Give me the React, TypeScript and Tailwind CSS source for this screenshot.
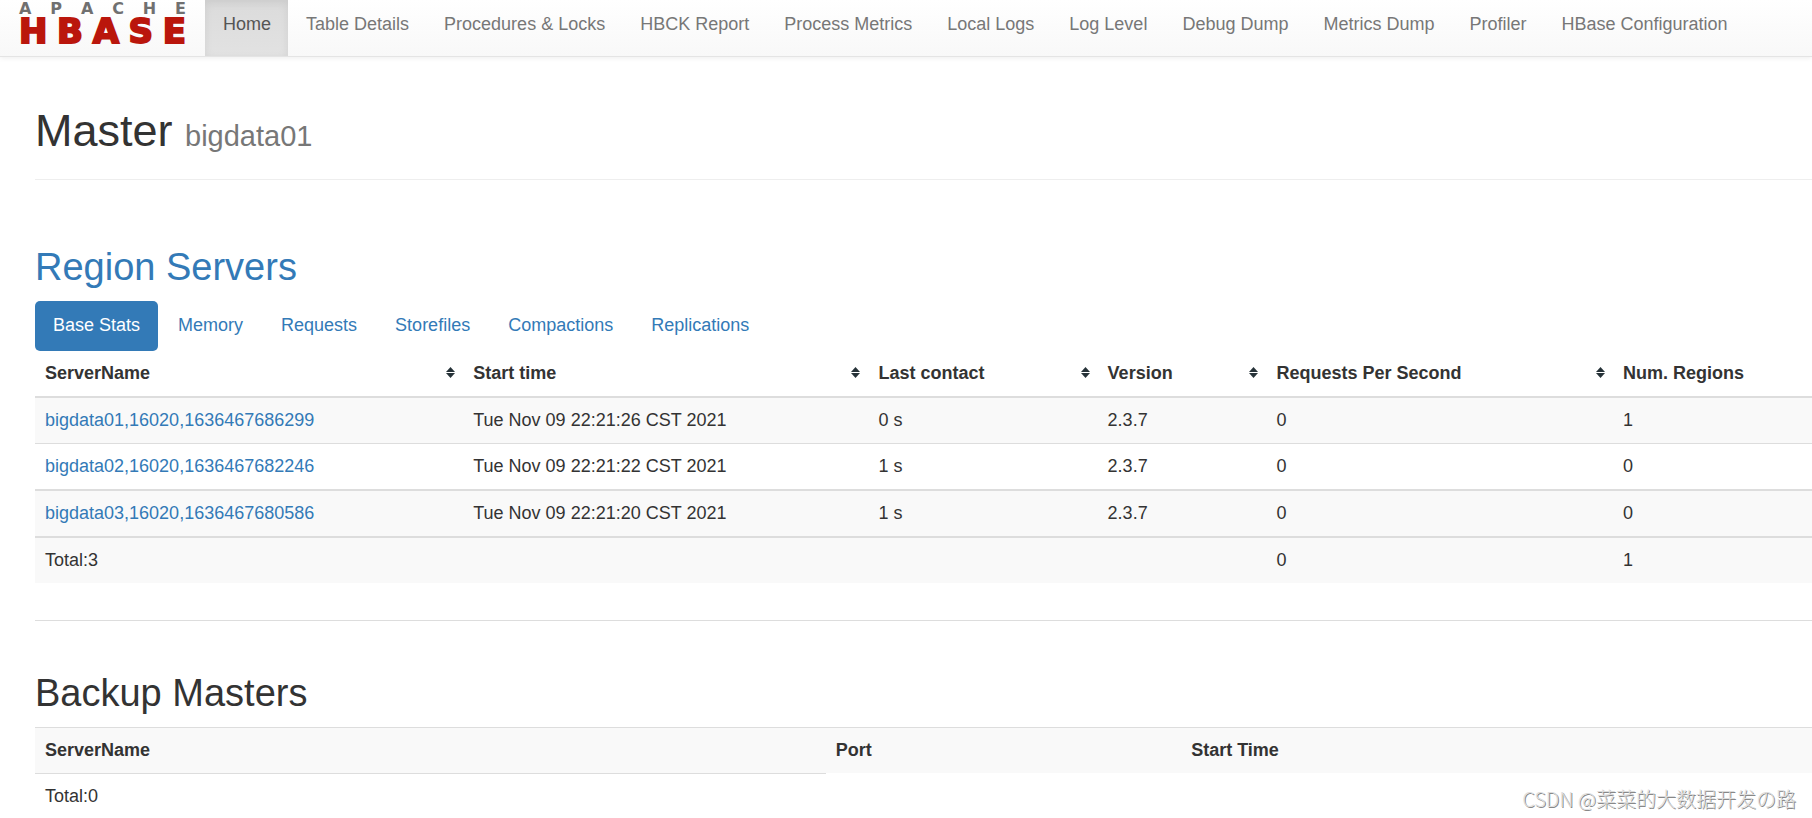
import { useState } from 'react'
import { clsx } from 'clsx'

const navItems = [
  'Home',
  'Table Details',
  'Procedures & Locks',
  'HBCK Report',
  'Process Metrics',
  'Local Logs',
  'Log Level',
  'Debug Dump',
  'Metrics Dump',
  'Profiler',
  'HBase Configuration',
]

const tabs = [
  'Base Stats',
  'Memory',
  'Requests',
  'Storefiles',
  'Compactions',
  'Replications',
]

const columns = [
  { label: 'ServerName', width: 'w-[24.1%]', sortable: true },
  { label: 'Start time', width: 'w-[22.8%]', sortable: true },
  { label: 'Last contact', width: 'w-[12.9%]', sortable: true },
  { label: 'Version', width: 'w-[9.5%]', sortable: true },
  { label: 'Requests Per Second', width: 'w-[19.5%]', sortable: true },
  { label: 'Num. Regions', width: 'w-[11.2%]', sortable: false },
]

const servers = [
  {
    name: 'bigdata01,16020,1636467686299',
    start: 'Tue Nov 09 22:21:26 CST 2021',
    contact: '0 s',
    version: '2.3.7',
    rps: 0,
    regions: 1,
    row: 'bg-[#f9f9f9]',
    cell: 'border-t-2',
  },
  {
    name: 'bigdata02,16020,1636467682246',
    start: 'Tue Nov 09 22:21:22 CST 2021',
    contact: '1 s',
    version: '2.3.7',
    rps: 0,
    regions: 0,
    row: 'bg-white',
    cell: 'border-t',
  },
  {
    name: 'bigdata03,16020,1636467680586',
    start: 'Tue Nov 09 22:21:20 CST 2021',
    contact: '1 s',
    version: '2.3.7',
    rps: 0,
    regions: 0,
    row: 'bg-[#f9f9f9]',
    cell: 'border-t-2',
  },
]

function Logo() {
  return (
    <a
      href="#"
      aria-label="Apache HBase"
      className="flex w-[167px] flex-col font-['DejaVu_Sans',sans-serif] font-bold"
    >
      <span className="flex h-[17px] justify-between text-[16px] leading-[18px] text-[#707070]">
        {'APACHE'.split('').map((c, i) => (
          <span key={i}>{c}</span>
        ))}
      </span>
      <span className="flex h-[29px] justify-between text-[34px] leading-[29px] text-[#ba160c] [-webkit-text-stroke:2px_#ba160c]">
        {'HBASE'.split('').map((c, i) => (
          <span key={i}>{c}</span>
        ))}
      </span>
    </a>
  )
}

function SortIcon() {
  return (
    <svg width="9" height="11" viewBox="0 0 9 11" fill="#263238" className="mb-0.5">
      <path d="M4.5 0 9 5H0z" />
      <path d="M0 6h9l-4.5 5z" />
    </svg>
  )
}

function Navbar() {
  return (
    <header className="flex border-b border-[#e4e4e4] bg-linear-to-b from-white to-[#f8f8f8] pl-[19px] shadow-[0_1px_5px_rgba(0,0,0,0.075)]">
      <Logo />
      <nav className="ml-[19px]">
        <ul className="flex">
          {navItems.map((item, i) => (
            <li key={item}>
              <a
                href="#"
                className={clsx(
                  'block pt-3 pr-[17px] pb-[19px] pl-[18px] whitespace-nowrap',
                  i === 0
                    ? 'bg-linear-to-b from-[#dbdbdb] to-[#e2e2e2] text-[#555] shadow-[inset_0_3px_9px_rgba(0,0,0,0.075)]'
                    : 'text-[#777]'
                )}
              >
                {item}
              </a>
            </li>
          ))}
        </ul>
      </nav>
    </header>
  )
}

function RegionServers() {
  const [active, setActive] = useState('Base Stats')

  return (
    <section className="mt-[66px]">
      <h2 className="mb-[13px] text-[38px] leading-[42px]">
        <a href="#" className="text-[#337ab7]">
          Region Servers
        </a>
      </h2>

      <div role="tablist" className="flex gap-0.5">
        {tabs.map((tab) => (
          <button
            key={tab}
            role="tab"
            aria-selected={tab === active}
            onClick={() => setActive(tab)}
            className={clsx(
              'rounded-[5px] px-[18px] pt-3 pb-[13px]',
              tab === active ? 'bg-[#337ab7] text-white' : 'text-[#337ab7]'
            )}
          >
            {tab}
          </button>
        ))}
      </div>

      <table className="w-full table-fixed border-separate border-spacing-0 text-left">
        <thead>
          <tr>
            {columns.map((col) => (
              <th key={col.label} className={clsx('py-[10px] pr-2 pl-[10px]', col.width)}>
                <button className="flex w-full items-center justify-between font-bold">
                  {col.label}
                  {col.sortable && <SortIcon />}
                </button>
              </th>
            ))}
          </tr>
        </thead>
        <tbody>
          {servers.map((s) => (
            <tr key={s.name} className={s.row}>
              <td className={clsx('border-[#ddd] p-[10px]', s.cell)}>
                <a href="#" className="text-[#337ab7]">
                  {s.name}
                </a>
              </td>
              <td className={clsx('border-[#ddd] p-[10px]', s.cell)}>{s.start}</td>
              <td className={clsx('border-[#ddd] p-[10px]', s.cell)}>{s.contact}</td>
              <td className={clsx('border-[#ddd] p-[10px]', s.cell)}>{s.version}</td>
              <td className={clsx('border-[#ddd] p-[10px]', s.cell)}>{s.rps}</td>
              <td className={clsx('border-[#ddd] p-[10px]', s.cell)}>{s.regions}</td>
            </tr>
          ))}
        </tbody>
        <tfoot>
          <tr className="bg-[#f9f9f9]">
            <td colSpan={4} className="border-t-2 border-[#ddd] p-[10px]">
              Total:3
            </td>
            <td className="border-t-2 border-[#ddd] p-[10px]">0</td>
            <td className="border-t-2 border-[#ddd] p-[10px]">1</td>
          </tr>
        </tfoot>
      </table>
    </section>
  )
}

function BackupMasters() {
  return (
    <section className="mt-[37px] border-t border-[#ddd] pt-[51px]">
      <h2 className="mb-[13px] text-[38px] leading-[42px]">Backup Masters</h2>
      <table className="w-full table-fixed border-separate border-spacing-0 text-left">
        <tbody>
          <tr className="bg-[#f9f9f9]">
            <th className="w-[44.5%] border-t border-[#ddd] p-[10px]">ServerName</th>
            <th className="w-[20%] border-t border-[#ddd] p-[10px]">Port</th>
            <th className="border-t border-[#ddd] p-[10px]">Start Time</th>
          </tr>
          <tr>
            <td className="border-t border-[#ddd] p-[10px]">Total:0</td>
          </tr>
        </tbody>
      </table>
    </section>
  )
}

export default function App() {
  return (
    <div className="relative min-h-screen overflow-hidden bg-white font-['Liberation_Sans',Arial,sans-serif] text-[18px] leading-[25px] text-[#333]">
      <Navbar />
      <main className="pl-[35px]">
        <div className="border-b border-[#eee] pt-[49px] pb-[23px]">
          <h1 className="text-[45px] leading-[50px]">
            Master <small className="text-[29px] leading-none text-[#777]">bigdata01</small>
          </h1>
        </div>
        <RegionServers />
        <BackupMasters />
      </main>
      <p className="absolute right-4 bottom-2 font-['Noto_Sans_CJK_SC',sans-serif] text-[20px] font-light text-[#ddd] [text-shadow:1px_1px_0_#888]">
        CSDN @菜菜的大数据开发の路
      </p>
    </div>
  )
}
